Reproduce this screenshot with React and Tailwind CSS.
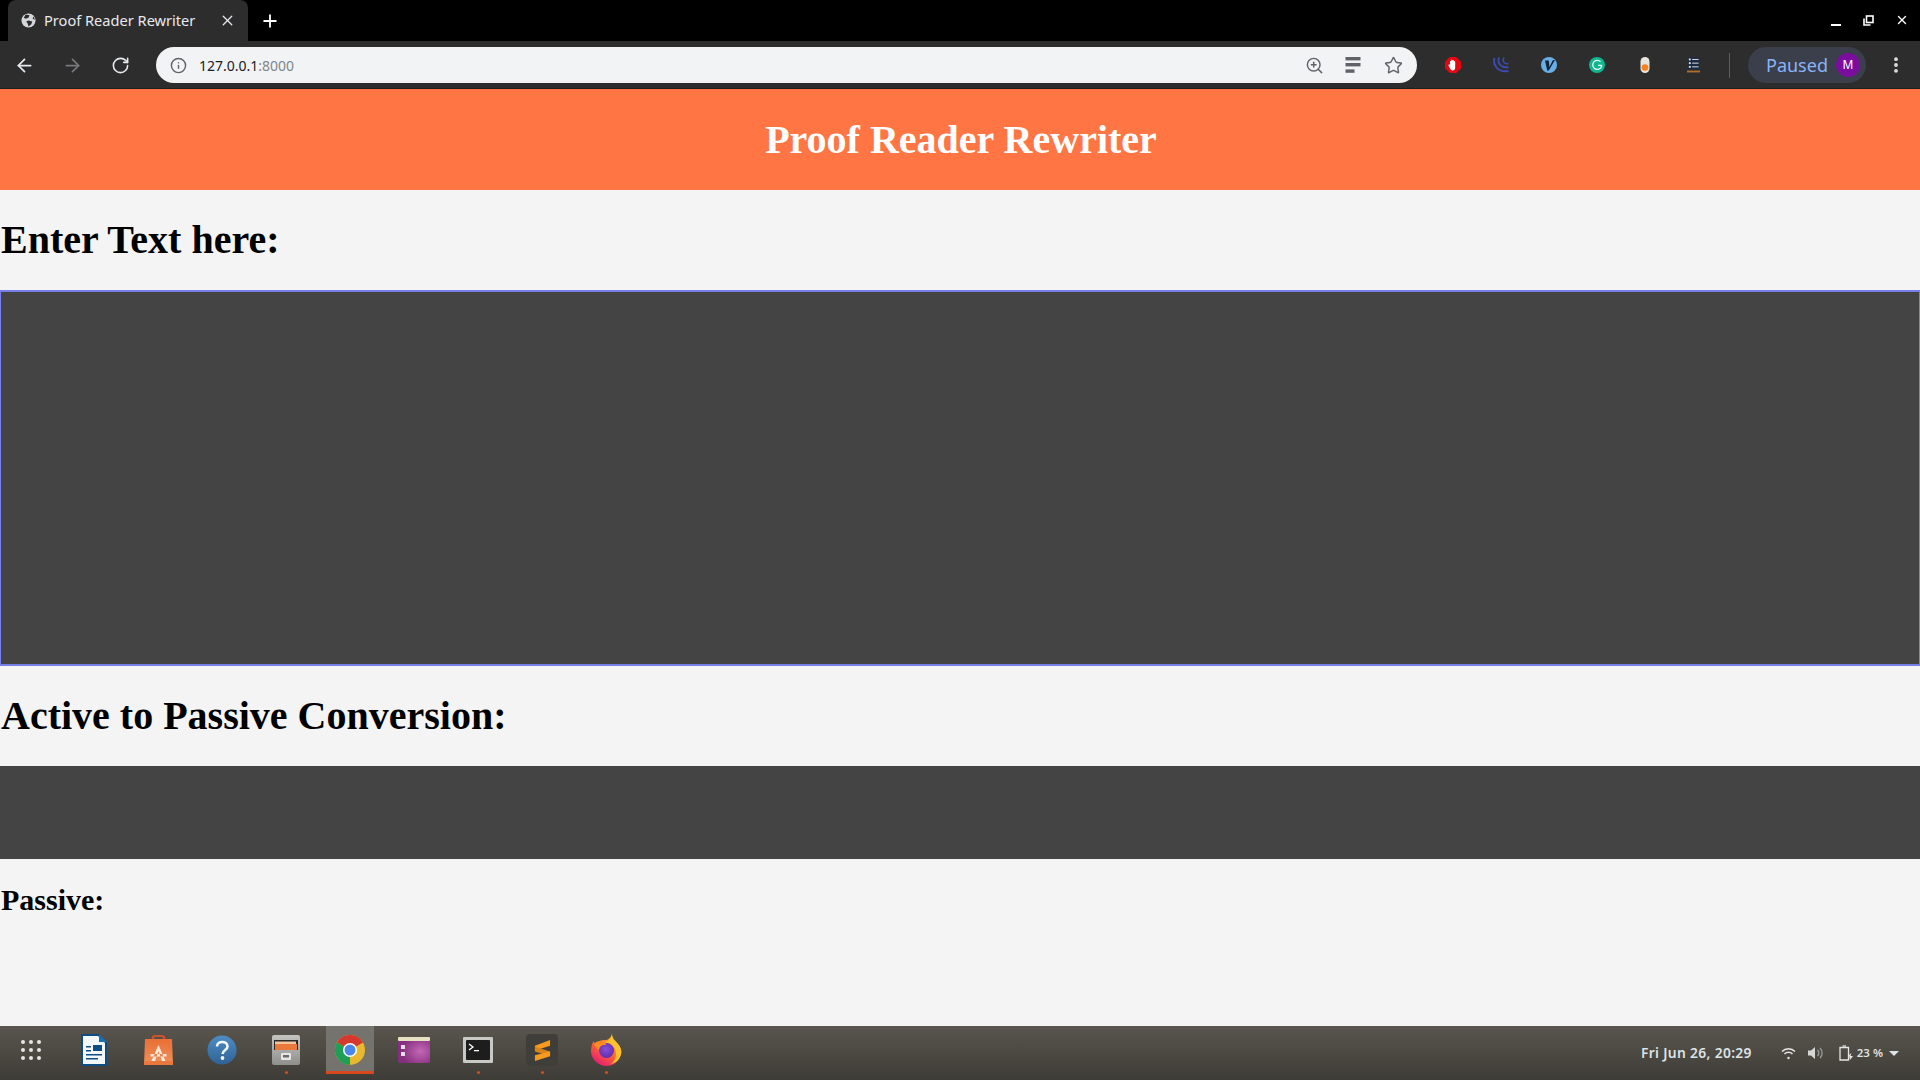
import React from "react";
import { ArrowLeft, ArrowRight, RotateCw, Info, ZoomIn, Star, X, Plus, EllipsisVertical } from "lucide-react";

const Ext = ({ children }) => <div className="w-12 h-6 flex items-center justify-center">{children}</div>;

const Dot = () => <span className="absolute bottom-[6px] left-1/2 -ml-[1.5px] w-[3px] h-[3px] rounded-full bg-[#d4501e]" />;

const Dock = ({ children, dot, active, w = "w-16" }) => (
  <div className={`relative ${w} h-full flex items-center justify-center shrink-0 pb-[6px]`}>
    {active && <div className="absolute top-0 left-2 right-2 bottom-[6px] bg-[#75736d] border-b-[3px] border-[#d9481c]" />}
    <div className="relative flex">{children}</div>
    {dot && <Dot />}
  </div>
);

function Tabbar() {
  return (
    <div className="h-[41px] bg-black flex items-end relative">
      <div className="ml-2 w-[240px] h-[41px] bg-[#2d2d2d] rounded-t-lg flex items-center pl-[13px] pr-3 text-[#e8eaed]">
        <svg width="15" height="15" viewBox="0 0 16 16">
          <circle cx="8" cy="8" r="7.5" fill="#d5d7da" />
          <path d="M5 1.5 L9 2.5 L8 5 L5 6 L3 5 Z M8 8 L12 9 L11 12 L8 14.5 L7 11 L5.5 9 Z M13 3.5 L15 7 L12.5 6.5 Z" fill="#2d2d2d" />
        </svg>
        <span className="ml-[8px] text-[14.6px] whitespace-nowrap font-['Noto_Sans',sans-serif]">Proof Reader Rewriter</span>
        <X size={17} strokeWidth={1.8} className="ml-auto" />
      </div>
      <div className="w-11 h-[41px] flex items-center justify-center text-white">
        <Plus size={20} strokeWidth={2.2} />
      </div>
      <div className="ml-auto h-[41px] flex items-center pr-[2px] pb-[1px] text-white">
        <div className="w-[33px] h-5 flex items-end justify-center"><div className="w-[10px] h-[2px] mb-1 bg-white" /></div>
        <div className="w-[33px] h-5 flex items-center justify-center">
          <svg width="11" height="11" viewBox="0 0 11 11" fill="none" stroke="#fff" strokeWidth="1.6">
            <rect x="3.5" y="1" width="6.5" height="6.5" />
            <path d="M1 3.5V10H7.5" />
          </svg>
        </div>
        <div className="w-[33px] h-5 flex items-center justify-center"><X size={14} strokeWidth={2.4} /></div>
      </div>
    </div>
  );
}

function Toolbar() {
  return (
    <div className="h-[48px] bg-[#2d2d2d] border-b border-[#1f1f1f] flex items-center text-[#e8eaed] pt-[1px]">
      <div className="w-12 flex justify-center"><ArrowLeft size={21} strokeWidth={2} /></div>
      <div className="w-12 flex justify-center text-[#77797c]"><ArrowRight size={21} strokeWidth={2} /></div>
      <div className="w-12 flex justify-center"><RotateCw size={19} strokeWidth={2} /></div>
      <div className="ml-3 w-[1261px] h-9 rounded-full bg-[#f1f3f4] flex items-center pl-[14px] pr-[14px] text-[#5f6368]">
        <Info size={17} strokeWidth={2} />
        <span className="ml-[12px] text-[14px] font-['Noto_Sans',sans-serif] text-[#202124]">127.0.0.1<span className="text-[#80868b]">:8000</span></span>
        <div className="ml-auto flex items-center">
          <ZoomIn size={19} strokeWidth={1.8} />
          <svg className="ml-[21px]" width="16" height="16" viewBox="0 0 15 16" fill="#5f6368">
            <rect x="0" y="0" width="15" height="3.4" />
            <rect x="0" y="6" width="15" height="3.4" />
            <rect x="0" y="12.4" width="9" height="3.4" />
          </svg>
          <Star className="ml-[23px]" size={19} strokeWidth={1.8} />
        </div>
      </div>
      <div className="ml-[12px] flex items-center">
        <Ext>
          <svg width="16" height="16" viewBox="0 0 16 16">
            <path d="M4.700 0H11.300L16 4.700V11.300L11.300 16H4.700L0 11.300V4.700Z" fill="#e40712" />
            <path d="M5 8V4.200a.7.700 0 0 1 1.300 0V3a.7.700 0 0 1 1.300 0v.5a.7.700 0 0 1 1.300 0v1a.7.700 0 0 1 1.300 0v6c0 2-1 3-2.600 3S5.800 12.500 5 11.500L3.500 8.500c-.4-.8.900-1.300 1.500-.5z" fill="#fff" />
          </svg>
        </Ext>
        <Ext>
          <svg width="17" height="16" viewBox="0 0 17 16" fill="none" stroke="#3b4bb0">
            <path d="M1.500 1C-.5 8 5 16 15.500 14" strokeWidth="2" />
            <path d="M6 0.500C4 6 8 11.500 15.500 10" strokeWidth="1.800" />
            <path d="M11 0.500C9 4 11 7.500 15.500 6.500" strokeWidth="1.500" />
          </svg>
        </Ext>
        <Ext>
          <svg width="16" height="16" viewBox="0 0 16 16">
            <circle cx="8" cy="8" r="8" fill="#6aaee6" />
            <path d="M4 3.500H7.800L8.300 10L12 3H14L7.800 13.500H6.200Z" fill="#10243a" />
          </svg>
        </Ext>
        <Ext>
          <svg width="16" height="16" viewBox="0 0 16 16">
            <circle cx="8" cy="8" r="8" fill="#10b68f" />
            <path d="M11.500 4.800A4.500 4.500 0 1 0 12.500 9.500L12.500 8.300H9" fill="none" stroke="#e9fbf6" strokeWidth="1.300" />
          </svg>
        </Ext>
        <Ext>
          <svg width="10" height="16" viewBox="0 0 10 16">
            <rect x="0.500" y="0" width="9" height="16" rx="4.500" fill="#e8e4dc" />
            <circle cx="5" cy="10.500" r="3.300" fill="#f5821f" />
          </svg>
        </Ext>
        <Ext>
          <svg width="13" height="16" viewBox="0 0 14 16">
            <rect x="1" y="0" width="12" height="13" fill="#1c2a3f" />
            <g fill="#dfe6ef">
              <rect x="2" y="1" width="2" height="2" />
              <rect x="2" y="5" width="2" height="2" />
              <rect x="2" y="9" width="2" height="2" />
              <rect x="5.500" y="1.500" width="7" height="1" />
              <rect x="5.500" y="5.500" width="7" height="1" />
              <rect x="5.500" y="9.500" width="7" height="1" />
            </g>
            <rect x="0" y="14" width="14" height="2" fill="#b0702c" />
          </svg>
        </Ext>
      </div>
      <div className="ml-3 w-px h-[25px] bg-[#5c5e61]" />
      <div className="ml-[18px] w-[118px] h-9 rounded-full bg-[#3b3e4b] flex items-center pl-[18px] pr-[6px]">
        <span className="text-[18px] text-[#8ab4f8] font-['Noto_Sans',sans-serif]">Paused</span>
        <div className="ml-auto w-6 h-6 rounded-full bg-[#7b0d9e] text-white text-[12px] flex items-center justify-center font-['Noto_Sans',sans-serif]">M</div>
      </div>
      <div className="ml-[6px] w-[48px] flex justify-center text-[#dfe1e5]"><EllipsisVertical size={20} strokeWidth={2.6} /></div>
    </div>
  );
}

function Taskbar() {
  return (
    <div className="mt-auto h-[54px] flex items-stretch bg-gradient-to-b from-[#5a564e] to-[#3e3c37] text-[#dde3e8]">
      <Dock w="w-[62px]">
        <svg width="22" height="22" viewBox="0 0 22 22" fill="#e6e6e6">
          {[3, 11, 19].map((y) => [3, 11, 19].map((x) => <circle key={x + "-" + y} cx={x} cy={y} r="2" />))}
        </svg>
      </Dock>
      <Dock>
        <svg width="26" height="32" viewBox="0 0 26 32">
          <path d="M0 0H18L26 8V32H0Z" fill="#0f4c81" />
          <path d="M2 2H17L24 9V30H2Z" fill="#f4f7fa" />
          <path d="M18 0L26 8H18Z" fill="#1a6fb0" />
          <rect x="12" y="11" width="9" height="6" fill="#0f4c81" />
          <g fill="#0f4c81"><rect x="5" y="12" width="5" height="1.500" /><rect x="5" y="16" width="5" height="1.500" /><rect x="5" y="20" width="16" height="1.500" /><rect x="5" y="24" width="12" height="1.500" /></g>
        </svg>
      </Dock>
      <Dock>
        <svg width="29" height="31" viewBox="0 0 29 31">
          <defs>
            <linearGradient id="bag" x1="0" y1="0" x2="0" y2="1"><stop offset="0" stopColor="#e96f35" /><stop offset="1" stopColor="#f0915a" /></linearGradient>
          </defs>
          <path d="M9 6V2C9 .5 20 .5 20 2V6" fill="none" stroke="#c9532a" strokeWidth="2.500" />
          <path d="M1 4H28L29 30H0Z" fill="url(#bag)" />
          <path d="M0 26H29V30H0Z" fill="#e9793c" />
          <path d="M14.500 10L7.500 26H11L14.500 16L18 26H21.500Z M6.500 19H22.500V21.500H6.500Z" fill="#fbe9df" />
        </svg>
      </Dock>
      <Dock>
        <svg width="30" height="30" viewBox="0 0 30 30">
          <defs>
            <linearGradient id="help" x1="0" y1="0" x2="0" y2="1"><stop offset="0" stopColor="#4f8cc4" /><stop offset="1" stopColor="#2f6396" /></linearGradient>
          </defs>
          <circle cx="15" cy="15" r="14.500" fill="url(#help)" />
          <path d="M10 11.500C10 5.500 20.500 5.500 20.500 11.500C20.500 15 16 15 15.500 19" fill="none" stroke="#f2f6fa" strokeWidth="2.600" />
          <circle cx="15.500" cy="23" r="1.900" fill="#f2f6fa" />
        </svg>
      </Dock>
      <Dock dot>
        <svg width="28" height="30" viewBox="0 0 28 30">
          <defs>
            <linearGradient id="cab" x1="0" y1="0" x2="0" y2="1"><stop offset="0" stopColor="#c4c4c1" /><stop offset="1" stopColor="#8f8f8c" /></linearGradient>
          </defs>
          <rect width="28" height="30" rx="2" fill="url(#cab)" />
          <rect x="2" y="5" width="24" height="10" fill="#2a2a2a" />
          <rect x="3" y="6.500" width="21" height="2.500" fill="#f4c39c" />
          <rect x="3" y="9" width="22" height="6" fill="#e8793a" />
          <rect x="9" y="18" width="10" height="7" rx="1" fill="#e6e6e4" />
          <rect x="11" y="20" width="6" height="2.500" fill="#6a6a6a" />
        </svg>
      </Dock>
      <Dock active>
        <svg width="30" height="30" viewBox="0 0 30 30">
          <circle cx="15" cy="15" r="15" fill="#e8b92e" />
          <path d="M15 15L2 7.500A15 15 0 0 1 28 7.500Z" fill="#d7382d" />
          <path d="M15 15L2 7.500A15 15 0 0 0 15 30Z" fill="#1f9e55" />
          <circle cx="15" cy="15" r="7" fill="#fff" />
          <circle cx="15" cy="15" r="5.500" fill="#4a87ea" />
        </svg>
      </Dock>
      <Dock>
        <svg width="32" height="26" viewBox="0 0 32 26">
          <defs>
            <radialGradient id="pur" cx="0.7" cy="0.55" r="0.6"><stop offset="0" stopColor="#c567b5" /><stop offset="1" stopColor="#84307f" /></radialGradient>
          </defs>
          <rect width="32" height="26" rx="2" fill="url(#pur)" />
          <rect width="32" height="4" rx="1" fill="#e7e1c4" />
          <rect x="3" y="8" width="4" height="4" fill="#e8dce8" />
          <rect x="3" y="15" width="4" height="4" fill="#e8dce8" />
        </svg>
      </Dock>
      <Dock dot>
        <svg width="30" height="26" viewBox="0 0 30 26">
          <rect width="30" height="26" rx="1" fill="#c8c8c5" />
          <rect x="3" y="3" width="24" height="20" rx="1" fill="#1d1d1d" />
          <path d="M6 7L10 10L6 13" fill="none" stroke="#fff" strokeWidth="1.300" />
          <rect x="11" y="13" width="5" height="1.300" fill="#fff" />
        </svg>
      </Dock>
      <Dock dot>
        <div className="w-8 h-8 bg-[#3f3e3a] flex items-center justify-center rounded-sm">
          <svg width="17" height="21" viewBox="0 0 18 22" fill="#f79a1e">
            <path d="M17 0V6L1 11V6Z" />
            <path d="M1 7L17 12V17L1 12Z" fill="#d9821a" />
            <path d="M17 12V17L1 22V16Z" />
          </svg>
        </div>
      </Dock>
      <Dock dot>
        <svg width="31" height="32" viewBox="0 0 31 32">
          <defs>
            <linearGradient id="ffb" x1="0.800" y1="0" x2="0.200" y2="1"><stop offset="0" stopColor="#ffc02e" /><stop offset="0.500" stopColor="#ff6a2b" /><stop offset="1" stopColor="#e6127f" /></linearGradient>
            <radialGradient id="ffg" cx="0.450" cy="0.400" r="0.600"><stop offset="0" stopColor="#8a4fd8" /><stop offset="1" stopColor="#5f2fb0" /></radialGradient>
          </defs>
          <path d="M21 0C21 5 24 6 27 10C31 15 31 19 29 23C26 29 21 32 15.500 32C7 32 0 25 0 17C0 13 1 9 3 7C3 9 4 10 5 11C7 7 10 6 14 6C17 6 20 4 21 0Z" fill="url(#ffb)" />
          <path d="M21 0C21 5 24 6 27 10C31 15 31 19 29 23C27 27 24 29 20 30C25 26 26 20 24 15C22 11 17 9 14 8C18 7 20 4 21 0Z" fill="#ffc22e" />
          <circle cx="15.500" cy="16.500" r="7.500" fill="url(#ffg)" />
          <path d="M3 10C5 7 10 6 13 8C15 9 16 10 14 11C10 11 8 13 8 16C6 15 4 13 3 10Z" fill="#ff8a24" />
        </svg>
      </Dock>
      <div className="ml-auto flex items-center pr-[21px] font-['Noto_Sans',sans-serif] font-semibold">
        <span className="text-[13.800px] tracking-[0.35px]">Fri Jun 26, 20:29</span>
        <svg className="ml-[29px]" width="15" height="13" viewBox="0 0 15 13" fill="none" stroke="#e6e6e6" strokeWidth="1.500">
          <path d="M1 4.500A9 9 0 0 1 14 4.500" /><path d="M3.500 7A5.500 5.500 0 0 1 11.500 7" /><circle cx="7.500" cy="11" r="1.200" fill="#e6e6e6" stroke="none" />
        </svg>
        <svg className="ml-[12px]" width="16" height="14" viewBox="0 0 16 14" fill="#d6d6d6">
          <path d="M0 4.500H3L7 1V13L3 9.500H0Z" />
          <path d="M9.500 4A4 4 0 0 1 9.500 10M12 2A7 7 0 0 1 12 12" fill="none" stroke="#9d9d9a" strokeWidth="1.300" />
        </svg>
        <svg className="ml-[15px]" width="14" height="16" viewBox="0 0 14 16" fill="none" stroke="#e6e6e6" strokeWidth="1.300">
          <path d="M1 2.500H9.500V15H1Z" /><path d="M3.500 1H7" /><path d="M10 10L12.500 8L11.500 11H14L11 15" fill="#e6e6e6" stroke="none" />
        </svg>
        <span className="ml-[4px] text-[11.500px]">23 %</span>
        <span className="ml-[6px] w-0 h-0 border-x-[5px] border-x-transparent border-t-[5px] border-t-[#dde3e8]" />
      </div>
    </div>
  );
}

export default function App() {
  return (
    <div className="w-[1920px] h-[1080px] flex flex-col bg-[#f4f4f4] overflow-hidden font-['Liberation_Serif',serif]">
      <Tabbar />
      <Toolbar />
      <header className="h-[101px] bg-[#ff7644] flex items-center justify-center pl-[2px] text-white text-[40px] font-bold">Proof Reader Rewriter</header>
      <h1 className="mt-[25px] pl-[1px] text-[40px] leading-[50px] font-bold text-black">Enter Text here:</h1>
      <div className="mt-[25px] h-[376px] bg-[#444444] border-y-2 border-x border-[#7680e8]" />
      <h2 className="mt-[25px] pl-[1px] text-[40px] leading-[50px] font-bold text-black">Active to Passive Conversion:</h2>
      <div className="mt-[25px] h-[93px] bg-[#444444]" />
      <h3 className="mt-[23px] pl-[1px] text-[30px] leading-[36px] font-bold text-black">Passive:</h3>
      <Taskbar />
    </div>
  );
}
